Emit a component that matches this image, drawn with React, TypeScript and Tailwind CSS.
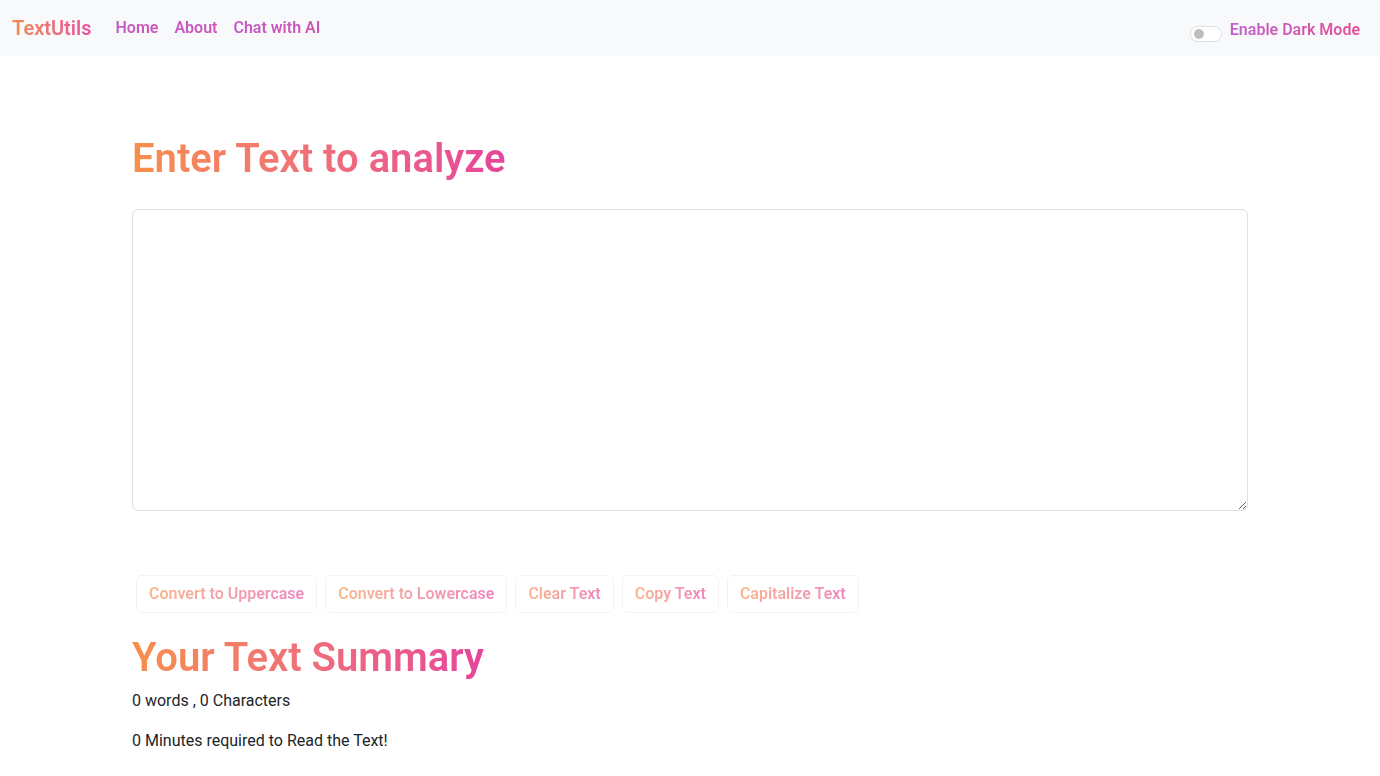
import React from "react";

const grad = "bg-gradient-to-r from-[#f78f48] to-[#e6449a] bg-clip-text text-transparent";

export default function App() {
  const buttons = ["Convert to Uppercase", "Convert to Lowercase", "Clear Text", "Copy Text", "Capitalize Text"];
  return (
    <div className="min-h-[776px] bg-white text-[#212529]" style={{ fontFamily: "Roboto, 'Liberation Sans', sans-serif" }}>
      <nav className="h-14 bg-[#f8f9fa] flex items-center justify-between pl-3 pr-5">
        <div className="flex items-center">
          <a className="text-[20px] font-semibold leading-[30px] mr-4 bg-gradient-to-r from-[#f28b4d] to-[#e4519c] bg-clip-text text-transparent">TextUtils</a>
          <div className="flex">
            {["Home", "About", "Chat with AI"].map((l) => (
              <a key={l} className="px-2 text-base font-semibold leading-6 bg-gradient-to-r from-[#c158cb] to-[#cf55b0] bg-clip-text text-transparent">{l}</a>
            ))}
          </div>
        </div>
        <div className="flex items-center gap-2 pt-[9px]">
          <span className="w-8 h-4 rounded-full border border-[#dee2e6] bg-white flex items-center px-[3px] mt-[3px]">
            <span className="w-[10px] h-[10px] rounded-full bg-[#bfbfbf]"></span>
          </span>
          <span className="text-base font-semibold leading-6 bg-gradient-to-r from-[#c05fcb] to-[#e34e98] bg-clip-text text-transparent -mt-[5px]">Enable Dark Mode</span>
        </div>
      </nav>
      <div className="w-[1116px] mx-auto">
        <h1 className={`mt-[79px] text-[40px] leading-[48px] font-semibold mb-[26px] inline-block ${grad}`}>Enter Text to analyze</h1>
        <textarea className="block w-full h-[302px] border border-[#dee2e6] rounded-[6px] px-3 py-[6px] outline-none"></textarea>
        <div className="flex mt-16 ml-1">
          {buttons.map((b) => (
            <button key={b} disabled className="mr-2 h-[38px] px-3 border border-[#eeeeee] rounded-[6px] opacity-65 text-base font-semibold">
              <span className={grad}>{b}</span>
            </button>
          ))}
        </div>
        <h1 className={`mt-[21px] text-[40px] leading-[48px] font-semibold mb-[7px] inline-block ${grad}`}>Your Text Summary</h1>
        <p className="text-base leading-6 mb-4">0 words , 0 Characters</p>
        <p className="text-base leading-6">0 Minutes required to Read the Text!</p>
      </div>
    </div>
  );
}
